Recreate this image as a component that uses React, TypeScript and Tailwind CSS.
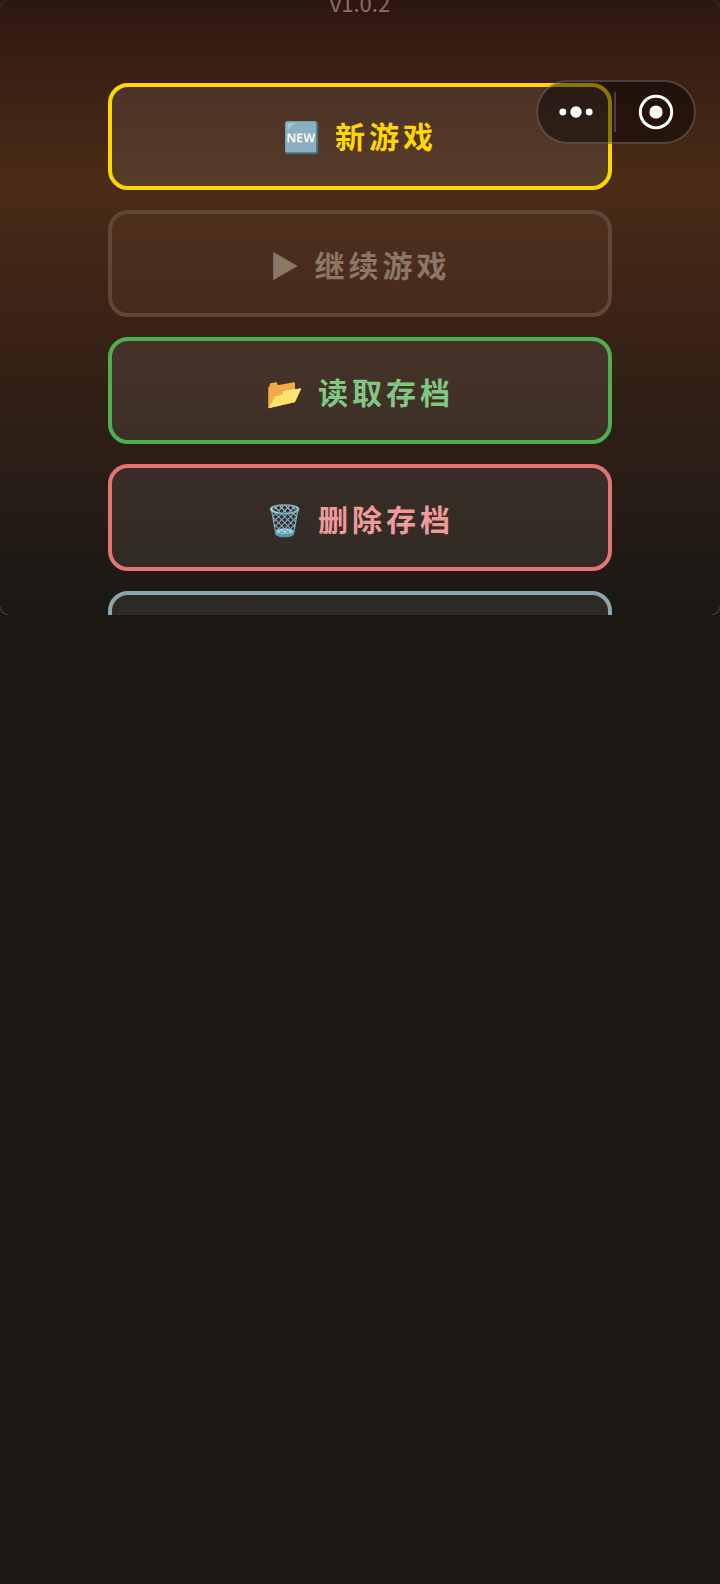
import type { ReactNode } from 'react';

type MenuItem = {
  id: string;
  icon: ReactNode;
  label: string;
  tone: string;
  disabled?: boolean;
};

const items: MenuItem[] = [
  {
    id: 'new',
    icon: <span className="font-['Noto_Color_Emoji']">🆕</span>,
    label: '新游戏',
    tone: 'border-[#ffd700] bg-white/8 text-[#ffd700]',
  },
  {
    id: 'continue',
    icon: '▶',
    label: '继续游戏',
    tone: 'border-[#614738] bg-[#ffb496]/5 text-[#8b7766]',
    disabled: true,
  },
  {
    id: 'load',
    icon: '📂',
    label: '读取存档',
    tone: 'border-[#4caf50] bg-white/8 text-[#81c784]',
  },
  {
    id: 'delete',
    icon: '🗑️',
    label: '删除存档',
    tone: 'border-[#e57373] bg-white/8 text-[#ef9a9a]',
  },
];

function MenuButton({ item }: { item: MenuItem }) {
  return (
    <button
      type="button"
      disabled={item.disabled}
      className={`flex h-[107px] w-full shrink-0 items-center justify-center rounded-[20px] border-4 text-[30px] leading-10 font-bold tracking-[4px] whitespace-pre ${item.tone}`}
    >
      <span>
        {item.icon} {item.label}
      </span>
    </button>
  );
}

function Capsule() {
  return (
    <div className="absolute top-20 right-6 flex h-16 w-40 items-center rounded-full border-2 border-white/20 bg-black/45">
      <button type="button" aria-label="更多" className="flex h-full w-19 items-center justify-center">
        <svg width="36" height="14" viewBox="0 0 36 14" fill="#fff">
          <circle cx="4.8" cy="7" r="3.4" />
          <circle cx="18" cy="7" r="5.7" />
          <circle cx="31.2" cy="7" r="3.4" />
        </svg>
      </button>
      <span className="h-10 w-0.5 bg-white/20" />
      <button type="button" aria-label="关闭" className="flex h-full flex-1 items-center justify-center pl-0.5">
        <svg width="36" height="36" viewBox="0 0 36 36">
          <circle cx="18" cy="18" r="15.7" fill="none" stroke="#fff" strokeWidth="3" />
          <circle cx="18" cy="18" r="6.6" fill="#fff" />
        </svg>
      </button>
    </div>
  );
}

export default function App() {
  return (
    <div className="min-h-screen bg-[#1a1713] font-['Noto_Sans_CJK_SC','Noto_Color_Emoji',sans-serif]">
      <main className="relative flex h-[615px] flex-col items-center overflow-hidden bg-[linear-gradient(180deg,#2c1810_0%,#3c2014_13%,#4a2c17_30%,#422617_41%,#2c1e15_72%,#1a1814_100%)]">
        <p className="-mt-3.5 mb-[65px] shrink-0 text-[22px] leading-8 text-[#8d6e63]">v1.0.2</p>
        <nav className="flex w-[70%] flex-col gap-5">
          {items.map((item) => (
            <MenuButton key={item.id} item={item} />
          ))}
          <button
            type="button"
            aria-label="设置"
            className="h-[107px] w-full shrink-0 rounded-[20px] border-4 border-[#90a4ae] bg-white/8"
          />
        </nav>
        <Capsule />
        <span className="absolute bottom-0 left-0 size-2 rounded-bl-full border-b border-l border-[#4a4640]" />
        <span className="absolute right-0 bottom-0 size-2 rounded-br-full border-r border-b border-[#4a4640]" />
        <span className="absolute top-0 left-0 size-2 rounded-tl-full border-t border-l border-[#3a2c24]" />
        <span className="absolute top-0 right-0 size-2 rounded-tr-full border-t border-r border-[#3a2c24]" />
      </main>
    </div>
  );
}
